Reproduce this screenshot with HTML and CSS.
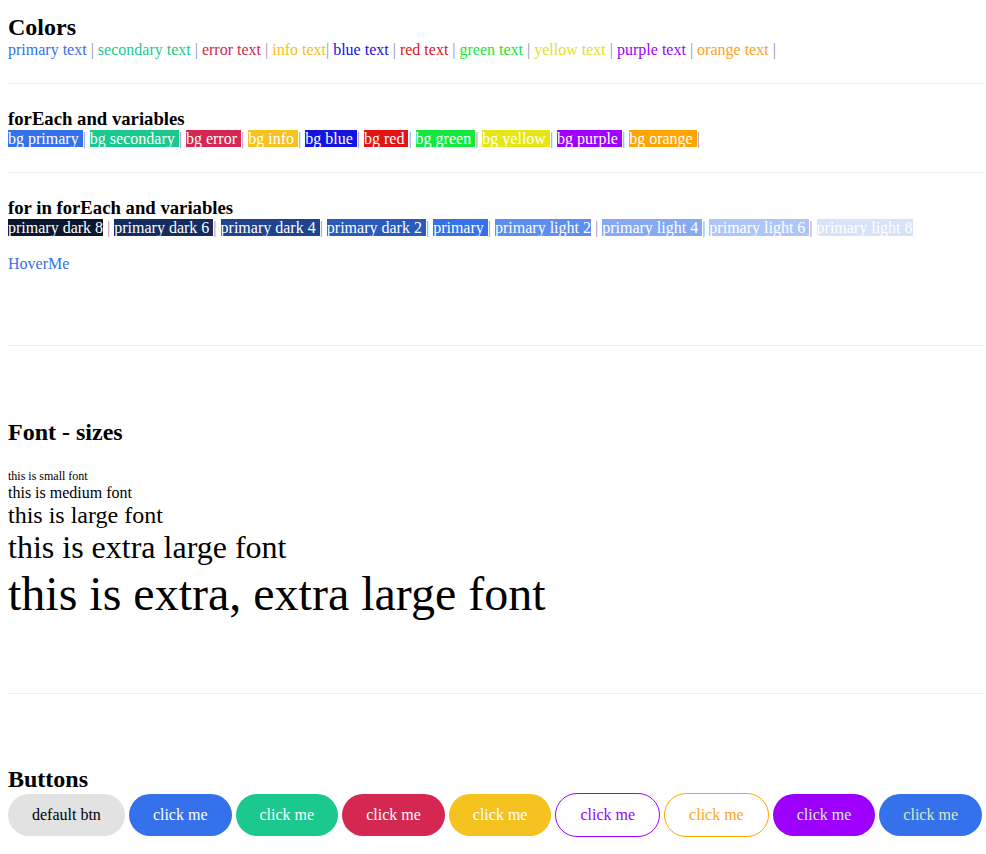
FILE: index.html
```html
<!DOCTYPE html>
<html lang="en">
<head>
<meta charset="utf-8">
<title>Style guide</title>
<link rel="stylesheet" href="styles.css">
</head>
<body>
<div class="page">
  <section class="block block-colors">
    <h2 class="title">Colors</h2>
    <div class="row"><span class="c-primary">primary text</span> <span class="sep">|</span> <span class="c-secondary">secondary text</span> <span class="sep">|</span> <span class="c-error">error text</span> <span class="sep">|</span> <span class="c-info">info text</span><span class="sep">|</span> <span class="c-blue">blue text</span> <span class="sep">|</span> <span class="c-red">red text</span> <span class="sep">|</span> <span class="c-green">green text</span> <span class="sep">|</span> <span class="c-yellow">yellow text</span> <span class="sep">|</span> <span class="c-purple">purple text</span> <span class="sep">|</span> <span class="c-orange">orange text</span> <span class="sep">|</span></div>
  </section>

  <section class="block block-small">
    <h3 class="subtitle">forEach and variables</h3>
    <div class="row"><span class="bg b-primary">bg primary </span><span class="sep">|</span> <span class="bg b-secondary">bg secondary </span><span class="sep">|</span> <span class="bg b-error">bg error </span><span class="sep">|</span> <span class="bg b-info">bg info </span><span class="sep">|</span> <span class="bg b-blue">bg blue </span><span class="sep">|</span> <span class="bg b-red">bg red </span><span class="sep">|</span> <span class="bg b-green">bg green </span><span class="sep">|</span> <span class="bg b-yellow">bg yellow </span><span class="sep">|</span> <span class="bg b-purple">bg purple </span><span class="sep">|</span> <span class="bg b-orange">bg orange </span><span class="sep">|</span></div>
  </section>

  <section class="block block-shades">
    <h3 class="subtitle">for in forEach and variables</h3>
    <div class="row"><span class="bg s-d8">primary dark 8</span> <span class="sep">|</span> <span class="bg s-d6">primary dark 6 </span><span class="sep">|</span> <span class="bg s-d4">primary dark 4 </span><span class="sep">|</span> <span class="bg s-d2">primary dark 2 </span><span class="sep">|</span> <span class="bg s-p">primary </span><span class="sep">|</span> <span class="bg s-l2">primary light 2</span> <span class="sep">|</span> <span class="bg s-l4">primary light 4 </span><span class="sep">|</span> <span class="bg s-l6">primary light 6 </span><span class="sep">|</span> <span class="bg s-l8">primary light 8</span></div>
    <p class="hover">HoverMe</p>
  </section>

  <section class="block block-fonts">
    <h2 class="title fonts-title">Font - sizes</h2>
    <div class="f-small">this is small font</div>
    <div class="f-medium">this is medium font</div>
    <div class="f-large">this is large font</div>
    <div class="f-xl">this is extra large font</div>
    <div class="f-xxl">this is extra, extra large font</div>
  </section>

  <section class="block block-buttons">
    <h2 class="title">Buttons</h2>
    <div class="buttons">
      <button class="btn btn-default">default btn</button>
      <button class="btn btn-primary">click me</button>
      <button class="btn btn-secondary">click me</button>
      <button class="btn btn-error">click me</button>
      <button class="btn btn-info">click me</button>
      <button class="btn btn-outline-purple">click me</button>
      <button class="btn btn-outline-orange">click me</button>
      <button class="btn btn-purple">click me</button>
      <button class="btn btn-blue">click me</button>
    </div>
  </section>
</div>
</body>
</html>
```

FILE: styles.css
```css
html, body {
  margin: 0;
  padding: 0;
  background: #ffffff;
}

body {
  font-family: "Liberation Serif", "Times New Roman", serif;
  font-size: 16px;
  color: #000000;
}

.page {
  padding: 0 3px 0 8px;
}

.block {
  border-top: 1px dotted #e2e2e2;
}

.block-colors {
  border-top: none;
  padding: 14px 0 24px;
}

.block-small {
  padding: 24px 0 24px;
}

.block-shades {
  padding: 24px 0 72px;
}

.block-fonts {
  padding: 73px 0 72px;
}

.block-buttons {
  padding: 72px 0 14px;
}

.title {
  margin: 0;
  font-size: 24px;
  font-weight: bold;
}

.fonts-title {
  margin-bottom: 23px;
}

.subtitle {
  margin: 0;
  font-size: 18.72px;
  font-weight: bold;
}

.sep {
  color: #8c8fba;
}

/* text colours */
.c-primary { color: #3471eb; }
.c-secondary { color: #1bc98e; }
.c-error { color: #d42752; }
.c-info { color: #f7c01a; }
.c-blue { color: #1212e2; }
.c-red { color: #e41515; }
.c-green { color: #15e63a; }
.c-yellow { color: #e2e21a; }
.c-purple { color: #a000ff; }
.c-orange { color: #ffa21c; }

/* background chips */
.bg { color: #ffffff; }
.b-primary { background: #3471eb; }
.b-secondary { background: #1bc98e; }
.b-error { background: #d42752; }
.b-info { background: #f6c21f; }
.b-blue { background: #1414e0; }
.b-red { background: #e41414; }
.b-green { background: #14e83c; }
.b-yellow { background: #e6e614; }
.b-purple { background: #a000ff; }
.b-orange { background: #ffa500; }

.s-d8 { background: #0a172f; }
.s-d6 { background: #152d5e; }
.s-d4 { background: #1f448d; }
.s-d2 { background: #2a5abc; }
.s-p { background: #3471eb; }
.s-l2 { background: #5d8def; }
.s-l4 { background: #85aaf3; }
.s-l6 { background: #aec6f7; }
.s-l8 { background: #d6e3fb; }

.hover {
  margin: 18px 0 0;
  color: #3471eb;
}

.f-small { font-size: 12px; }
.f-medium { font-size: 16px; }
.f-large { font-size: 24px; }
.f-xl { font-size: 32px; }
.f-xxl { font-size: 48px; }

.buttons {
  display: flex;
  align-items: center;
  gap: 4px;
}

.btn {
  font-family: "Liberation Serif", "Times New Roman", serif;
  font-size: 16px;
  line-height: 18px;
  padding: 12px 24px;
  border: none;
  border-radius: 21px;
  color: #ffffff;
  cursor: pointer;
  white-space: nowrap;
}

.btn-default { background: #e2e2e2; color: #000000; }
.btn-primary { background: #3471eb; }
.btn-secondary { background: #1bc98e; }
.btn-error { background: #d42752; }
.btn-info { background: #f6c21f; }
.btn-outline-purple {
  background: #ffffff;
  border: 1px solid #a000ff;
  color: #9a00ff;
  border-radius: 22px;
}
.btn-outline-orange {
  background: #ffffff;
  border: 1px solid #ffa500;
  color: #ffa52a;
  border-radius: 22px;
}
.btn-purple { background: #9d00ff; color: #d2ecc6; }
.btn-blue { background: #3471eb; color: #dce8c6; }
```
